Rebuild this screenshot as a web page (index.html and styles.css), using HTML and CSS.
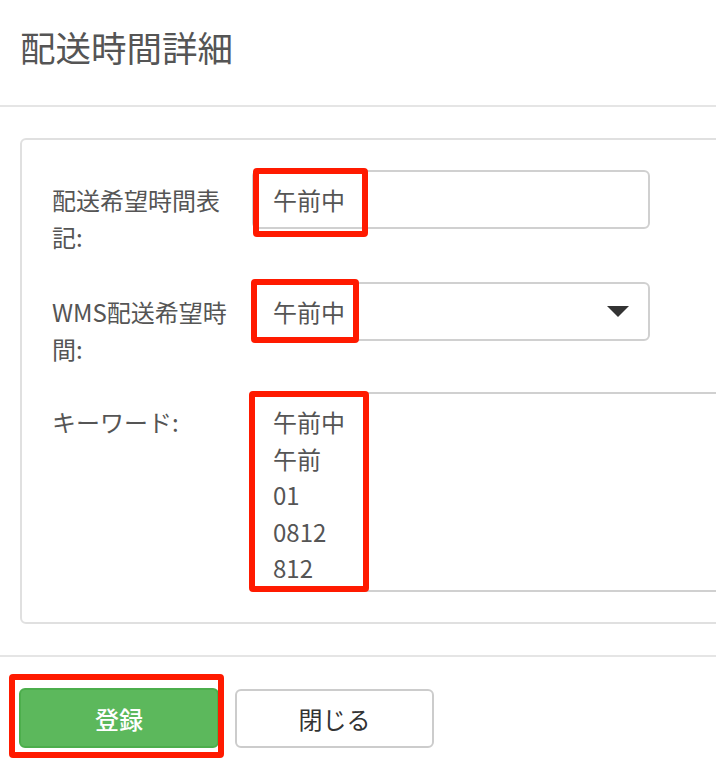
FILE: index.html
```html
<!DOCTYPE html>
<html lang="ja">
<head>
<meta charset="utf-8">
<title>配送時間詳細</title>
<link rel="stylesheet" href="styles.css">
</head>
<body>
<div class="page">
  <header class="header">
    <h1 class="title">配送時間詳細</h1>
  </header>
  <main class="body">
    <div class="panel">
      <div class="row row-1">
        <label class="label">配送希望時間表記:</label>
        <div class="field">
          <div class="input">午前中</div>
          <span class="mark mark-1"></span>
        </div>
      </div>
      <div class="row row-2">
        <label class="label">WMS配送希望時間:</label>
        <div class="field">
          <div class="input select">午前中
            <svg class="caret" width="22" height="12" viewBox="0 0 22 12"><path d="M0 0 H22 L11 11 Z" fill="#333"/></svg>
          </div>
          <span class="mark mark-2"></span>
        </div>
      </div>
      <div class="row row-3">
        <label class="label">キーワード:</label>
        <div class="field wide">
          <div class="textarea">午前中<br>午前<br>01<br>0812<br>812</div>
          <span class="mark mark-3"></span>
        </div>
      </div>
    </div>
  </main>
  <footer class="footer">
    <div class="btn-wrap">
      <button class="btn btn-primary">登録</button>
      <span class="mark mark-4"></span>
    </div>
    <button class="btn btn-default">閉じる</button>
  </footer>
</div>
</body>
</html>
```

FILE: styles.css
```css
html, body {
  margin: 0;
  padding: 0;
  overflow: hidden;
  background: #fff;
}
body {
  font-family: "Noto Sans CJK JP", "Noto Sans", sans-serif;
  color: #555;
  width: 716px;
  height: 766px;
}
.page {
  width: 800px;
}
.header {
  border-bottom: 2px solid #e5e5e5;
  padding: 0 20px;
  box-sizing: border-box;
  height: 107px;
  display: flex;
  align-items: center;
}
.title {
  margin: 0;
  margin-top: -11px;
  font-size: 35.5px;
  font-weight: 400;
  color: #555;
  line-height: 1;
}
.body {
  padding: 31px 20px 31px;
  border-bottom: 2px solid #e5e5e5;
}
.panel {
  border: 2px solid #e0e0e0;
  border-radius: 6px;
  padding: 30px;
  width: 760px;
}
.row {
  display: flex;
  align-items: flex-start;
}
.row-1 { margin-bottom: 27px; }
.row-2 { margin-bottom: 25px; }
.label {
  width: 180px;
  margin-right: 20px;
  font-size: 24px;
  line-height: 37px;
  padding-top: 11px;
  color: #555;
}
.field {
  position: relative;
  width: 398px;
}
.field.wide {
  width: 520px;
}
.input {
  height: 59px;
  box-sizing: border-box;
  border: 2px solid #d0d0d0;
  border-radius: 6px;
  padding: 0 19px;
  font-size: 24px;
  line-height: 55px;
  color: #555;
  position: relative;
}
.select .caret {
  position: absolute;
  right: 19px;
  top: 22px;
}
.textarea {
  height: 200px;
  box-sizing: border-box;
  border: 2px solid #d0d0d0;
  border-radius: 6px 0 0 6px;
  padding: 10px 19px;
  font-size: 24px;
  line-height: 36.5px;
  color: #555;
}
.mark {
  position: absolute;
  border: 6px solid #ff1a00;
  border-radius: 4px;
  box-sizing: border-box;
  pointer-events: none;
}
.mark-1 { left: 1px; top: -2px; width: 115px; height: 69px; }
.mark-2 { left: -1px; top: -3px; width: 108px; height: 64px; }
.mark-3 { left: -3px; top: -1px; width: 120px; height: 201px; }
.footer {
  padding: 31px 19px 0;
  display: flex;
  gap: 16px;
  align-items: flex-start;
}
.btn-wrap {
  position: relative;
}
.btn {
  font-family: "Noto Sans CJK JP", "Noto Sans", sans-serif;
  font-size: 24px;
  height: 60px;
  border-radius: 6px;
  margin: 0;
  padding: 0;
  box-sizing: border-box;
  cursor: pointer;
}
.btn-primary {
  width: 200px;
  background: #5cb85c;
  border: 2px solid #4cae4c;
  color: #fff;
  font-weight: 500;
}
.btn-default {
  width: 199px;
  background: #fff;
  border: 2px solid #cccccc;
  color: #333;
  font-weight: 400;
  margin-top: 1px;
  height: 59px;
}
.mark-4 { left: -10px; top: -14px; width: 215px; height: 84px; }
```
